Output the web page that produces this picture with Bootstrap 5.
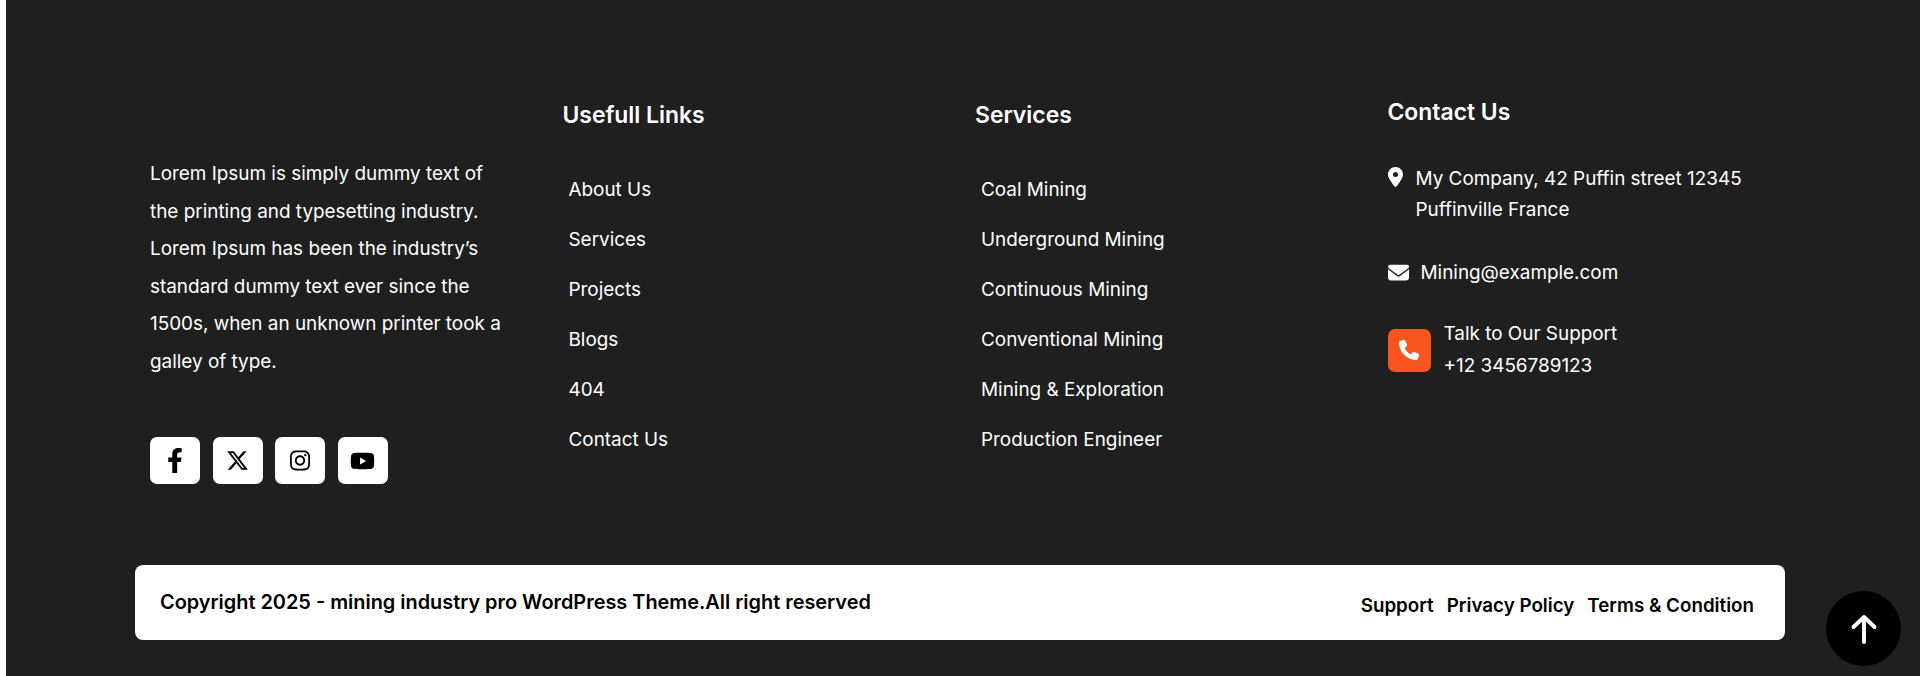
<!DOCTYPE html>
<html lang="en">
<head>
    <meta charset="UTF-8">
    <title>Footer</title>
    <meta name="viewport" content="width=device-width, initial-scale=1">
    <link href="https://cdn.jsdelivr.net/npm/bootstrap@5.3.0/dist/css/bootstrap.min.css" rel="stylesheet">
    <style>
        body {
            background: #fff;
            font-family: "Inter", "Liberation Sans", sans-serif;
            overflow: hidden;
        }
        #siteFooter {
            margin-left: 6px;
            height: 676px;
            padding-top: 102px;
            background: #1f1f1f;
            color: #fff;
            overflow: hidden;
        }
        .footer-wrap {
            width: 1650px;
            margin-left: 129px;
        }
        .footer-col {
            padding-left: 15px;
            padding-right: 15px;
            font-size: 18.9px;
        }
        .footer-title {
            margin: 0 0 36.6px;
            font-size: 22.9px;
            line-height: 26.4px;
            font-weight: 600;
        }
        .footer-title.contact-title {
            margin-top: -3px;
            margin-bottom: 37.6px;
        }
        .about-text {
            max-width: 360px;
            margin: 53px 0 57px;
            line-height: 37.5px;
        }
        .social-row {
            gap: 12.5px;
        }
        .social-link {
            width: 50px;
            height: 47px;
            border-radius: 7px;
            background: #fff;
            color: #000;
        }
        .footer-links li {
            height: 50px;
            line-height: 50px;
            padding-left: 6px;
        }
        .footer-links a,
        .bottom-links a {
            color: inherit;
            text-decoration: none;
        }
        .contact-line {
            line-height: 31px;
        }
        .contact-line + .contact-line {
            margin-top: 32px;
        }
        .contact-line.support-line {
            margin-top: 30px;
            line-height: 32px;
        }
        .pin-icon {
            margin-top: 4px;
            margin-right: 13px;
        }
        .mail-icon {
            margin-right: 12px;
        }
        .phone-box {
            width: 43px;
            height: 43px;
            margin-right: 13px;
            border-radius: 7px;
            background: #f95520;
        }
        .bottom-bar {
            height: 75px;
            margin-top: 81px;
            padding: 0 31px 0 25px;
            border-radius: 8px;
            background: #fff;
            color: #000;
            font-weight: 600;
        }
        .copy-text {
            font-size: 19.9px;
            margin: 0;
        }
        .bottom-links {
            font-size: 18.8px;
            gap: 13px;
            margin-top: 7px;
        }
        #scrollTop {
            position: fixed;
            right: 19px;
            bottom: 10px;
            width: 75px;
            height: 75px;
            border-radius: 50%;
            background: #000;
        }
    </style>
</head>
<body>

<footer id="siteFooter">
    <div class="footer-wrap">
        <div class="row g-0">
            <div class="col-3 footer-col">
                <p class="about-text">Lorem Ipsum is simply dummy text of the printing and typesetting industry. Lorem Ipsum has been the industry’s standard dummy text ever since the 1500s, when an unknown printer took a galley of type.</p>
                <div class="d-flex social-row">
                    <a href="#" class="social-link d-flex align-items-center justify-content-center">
                        <svg width="16" height="25" viewBox="0 0 320 512" fill="currentColor"><path d="M279.14 288l14.22-92.66h-88.91v-60.13c0-25.35 12.42-50.06 52.24-50.06h40.42V6.26S260.43 0 225.36 0c-73.22 0-121.08 44.38-121.08 124.72v70.62H22.89V288h81.39v224h100.17V288z"/></svg>
                    </a>
                    <a href="#" class="social-link d-flex align-items-center justify-content-center">
                        <svg width="23" height="23" viewBox="0 0 512 512" fill="currentColor"><path d="M389.2 48h70.6L305.6 224.2 487 464H345L233.7 318.6 106.5 464H35.8L200.7 275.5 26.8 48H172.4L272.9 180.9 389.2 48zM364.4 421.8h39.1L151.1 88h-42L364.4 421.8z"/></svg>
                    </a>
                    <a href="#" class="social-link d-flex align-items-center justify-content-center">
                        <svg width="20" height="23" viewBox="0 0 448 512" fill="currentColor"><path d="M224.1 141c-63.6 0-114.9 51.3-114.9 114.9s51.3 114.9 114.9 114.9S339 319.5 339 255.9 287.7 141 224.1 141zm0 189.6c-41.1 0-74.7-33.5-74.7-74.7s33.5-74.7 74.7-74.7 74.7 33.5 74.7 74.7-33.6 74.7-74.7 74.7zm146.4-194.3c0 14.9-12 26.8-26.8 26.8-14.9 0-26.8-12-26.8-26.8s12-26.8 26.8-26.8 26.8 12 26.8 26.8zm76.1 27.2c-1.7-35.9-9.9-67.7-36.2-93.9-26.2-26.2-58-34.4-93.9-36.2-37-2.1-147.9-2.1-184.9 0-35.8 1.7-67.6 9.9-93.9 36.1s-34.4 58-36.2 93.9c-2.1 37-2.1 147.9 0 184.9 1.7 35.9 9.9 67.7 36.2 93.9s58 34.4 93.9 36.2c37 2.1 147.9 2.1 184.9 0 35.9-1.7 67.7-9.9 93.9-36.2 26.2-26.2 34.4-58 36.2-93.9 2.1-37 2.1-147.8 0-184.8zM398.8 388c-7.8 19.6-22.9 34.7-42.6 42.6-29.5 11.7-99.5 9-132.1 9s-102.7 2.6-132.1-9c-19.6-7.8-34.7-22.9-42.6-42.6-11.7-29.5-9-99.5-9-132.1s-2.6-102.7 9-132.1c7.8-19.6 22.9-34.7 42.6-42.6 29.5-11.7 99.5-9 132.1-9s102.7-2.6 132.1 9c19.6 7.8 34.7 22.9 42.6 42.6 11.7 29.5 9 99.5 9 132.1s2.7 102.7-9 132.1z"/></svg>
                    </a>
                    <a href="#" class="social-link d-flex align-items-center justify-content-center">
                        <svg width="25" height="22" viewBox="0 0 576 512" fill="currentColor"><path d="M549.655 124.083c-6.281-23.65-24.787-42.276-48.284-48.597C458.781 64 288 64 288 64S117.22 64 74.629 75.486c-23.497 6.322-42.003 24.947-48.284 48.597-11.412 42.867-11.412 132.305-11.412 132.305s0 89.438 11.412 132.305c6.281 23.65 24.787 41.5 48.284 47.821C117.22 448 288 448 288 448s170.78 0 213.371-11.486c23.497-6.321 42.003-24.171 48.284-47.821 11.412-42.867 11.412-132.305 11.412-132.305s0-89.438-11.412-132.305zm-317.51 213.508V175.185l142.739 81.205-142.739 81.201z"/></svg>
                    </a>
                </div>
            </div>
            <div class="col-3 footer-col">
                <h5 class="footer-title">Usefull Links</h5>
                <ul class="list-unstyled footer-links mb-0">
                    <li><a href="#">About Us</a></li>
                    <li><a href="#">Services</a></li>
                    <li><a href="#">Projects</a></li>
                    <li><a href="#">Blogs</a></li>
                    <li><a href="#">404</a></li>
                    <li><a href="#">Contact Us</a></li>
                </ul>
            </div>
            <div class="col-3 footer-col">
                <h5 class="footer-title">Services</h5>
                <ul class="list-unstyled footer-links mb-0">
                    <li><a href="#">Coal Mining</a></li>
                    <li><a href="#">Underground Mining</a></li>
                    <li><a href="#">Continuous Mining</a></li>
                    <li><a href="#">Conventional Mining</a></li>
                    <li><a href="#">Mining &amp; Exploration</a></li>
                    <li><a href="#">Production Engineer</a></li>
                </ul>
            </div>
            <div class="col-3 footer-col">
                <h5 class="footer-title contact-title">Contact Us</h5>
                <div class="d-flex contact-line">
                    <svg class="flex-shrink-0 pin-icon" width="15" height="20" viewBox="0 0 384 512" fill="currentColor"><path d="M215.7 499.2C267 435 384 279.4 384 192C384 86 298 0 192 0S0 86 0 192c0 87.4 117 243 168.3 307.2c12.3 15.3 35.1 15.3 47.4 0zM192 128a64 64 0 1 1 0 128 64 64 0 1 1 0-128z"/></svg>
                    <div>My Company, 42 Puffin street 12345<br>Puffinville France</div>
                </div>
                <div class="d-flex align-items-center contact-line">
                    <svg class="flex-shrink-0 mail-icon" width="21" height="21" viewBox="0 0 512 512" fill="currentColor"><path d="M48 64C21.5 64 0 85.5 0 112c0 15.1 7.1 29.3 19.2 38.4L236.8 313.6c11.4 8.5 27 8.5 38.4 0L492.8 150.4c12.1-9.1 19.2-23.3 19.2-38.4c0-26.5-21.5-48-48-48H48zM0 176V384c0 35.3 28.7 64 64 64H448c35.3 0 64-28.7 64-64V176L294.4 339.2c-22.8 17.1-54 17.1-76.8 0L0 176z"/></svg>
                    <span>Mining@example.com</span>
                </div>
                <div class="d-flex align-items-center contact-line support-line">
                    <div class="phone-box d-flex align-items-center justify-content-center flex-shrink-0">
                        <svg width="20" height="20" viewBox="0 0 512 512" fill="#fff"><path d="M164.9 24.6c-7.7-18.6-28-28.5-47.4-23.2l-88 24C12.1 30.2 0 46 0 64C0 311.4 200.6 512 448 512c18 0 33.8-12.1 38.6-29.5l24-88c5.3-19.4-4.6-39.7-23.2-47.4l-96-40c-16.3-6.8-35.2-2.1-46.3 11.6L304.7 368C234.3 334.7 177.3 277.7 144 207.3L193.3 167c13.7-11.2 18.4-30 11.6-46.3l-40-96z"/></svg>
                    </div>
                    <div>Talk to Our Support<br>+12 3456789123</div>
                </div>
            </div>
        </div>
        <div class="bottom-bar d-flex align-items-center justify-content-between">
            <p class="copy-text">Copyright 2025 - mining industry pro WordPress Theme.All right reserved</p>
            <div class="bottom-links d-flex">
                <a href="#">Support</a>
                <a href="#">Privacy Policy</a>
                <a href="#">Terms &amp; Condition</a>
            </div>
        </div>
    </div>
</footer>

<a href="#" id="scrollTop" class="d-flex align-items-center justify-content-center">
    <svg width="28" height="30" viewBox="0 0 28 30" fill="none" stroke="#fff" stroke-width="4" stroke-linecap="round" stroke-linejoin="round"><path d="M14 28V3M3.5 13L14 3l10.5 10"/></svg>
</a>

<script src="https://cdn.jsdelivr.net/npm/bootstrap@5.3.0/dist/js/bootstrap.bundle.min.js"></script>
</body>
</html>
